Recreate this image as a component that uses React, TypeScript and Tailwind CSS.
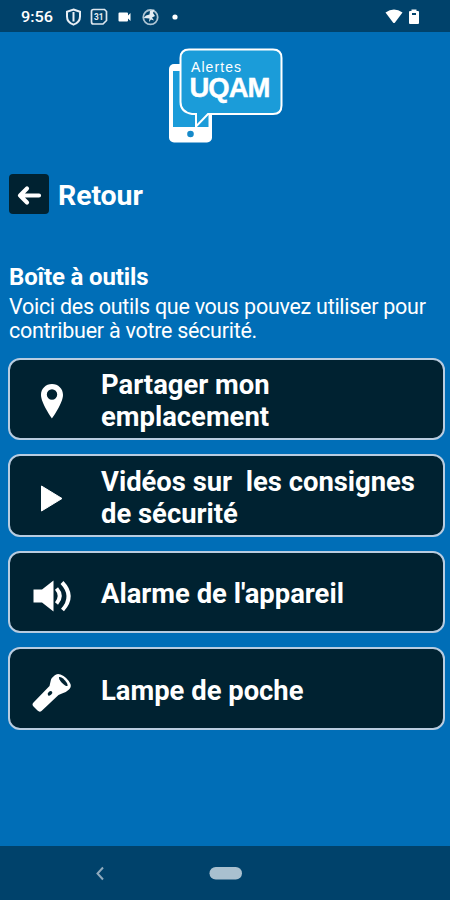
import React from "react";

function StatusBar() {
  return (
    <header className="h-8 shrink-0 bg-[#00426b] text-white">
      <svg width="450" height="32" viewBox="0 0 450 32" fill="none">
        <text x="21" y="22" fontSize="15" fontWeight="500" fill="#fff" textLength="32" lengthAdjust="spacingAndGlyphs">9:56</text>
        <path d="M73.500 9.500L80 11.800V16.500C80 20.500 77.300 23.300 73.500 24.600C69.700 23.300 67 20.500 67 16.500V11.800Z" stroke="#e8eff5" strokeWidth="2" />
        <path d="M73.500 12V21.500" stroke="#e8eff5" strokeWidth="2" />
        <path d="M93.500 9.500H104.500L106.500 11.500V20.500L103 24H93.500Q91.500 24 91.500 22V11.500Q91.500 9.500 93.500 9.500Z" stroke="#dce6ee" strokeWidth="1.700" />
        <text x="94" y="20" fontSize="8.500" fontWeight="700" fill="#e8eff5" textLength="9.500" lengthAdjust="spacingAndGlyphs">31</text>
        <path d="M119.500 12.500H127Q128 12.500 128 13.500V15.500L130.500 13V21L128 18.500V20.500Q128 21.500 127 21.500H119.500Q118.500 21.500 118.500 20.500V13.500Q118.500 12.500 119.500 12.500Z" fill="#fff" />
        <circle cx="150.500" cy="17.200" r="7.200" stroke="#adc4d3" strokeWidth="1.800" />
        <path d="M143.500 18L146 15.500L149.500 14.500L150 11L154.500 9.500L153 13L155 16L152 17.500L154 20.500L151 19.500L149 22L149.500 18.500Z" fill="#e4ecf2" />
        <circle cx="175" cy="17" r="2.600" fill="#fff" />
        <path d="M385.500 12.500Q394 6.500 402.500 12.500L395 22.500Q394 23.500 393 22.500Z" fill="#fff" />
        <path d="M410 11H411.500V9.500H416.500V11H418Q419 11 419 12V23Q419 24 418 24H410Q409 24 409 23V12Q409 11 410 11Z" fill="#fff" />
        <rect x="412" y="13" width="4" height="2" fill="#00426b" />
      </svg>
    </header>
  );
}

function Logo() {
  return (
    <svg width="116" height="98" viewBox="168 47 116 98" fill="none" aria-label="Alertes UQAM">
      <rect x="169" y="64" width="43" height="78.500" rx="5" fill="#fff" />
      <rect x="173" y="71" width="35.500" height="56" fill="#1b9cd9" />
      <circle cx="190.500" cy="134" r="3.300" fill="#1689c9" />
      <path d="M189 49.500H273Q281.500 49.500 281.500 58V105.500Q281.500 114 273 114H208L196 126.500V114H192Q180.500 112 180.500 102V58Q180.500 49.500 189 49.500Z" fill="#1b9cd9" stroke="#fff" strokeWidth="2" />
      <text x="191" y="71.500" fontFamily="Liberation Sans" fontSize="14" fill="#fff" textLength="50" lengthAdjust="spacing">Alertes</text>
      <text x="189.500" y="96.800" fontFamily="Liberation Sans" fontWeight="700" fontSize="27.500" fill="#fff" stroke="#fff" strokeWidth="0.400" textLength="81" lengthAdjust="spacing">UQAM</text>
    </svg>
  );
}

const PinIcon = () => (
  <svg width="84" height="79" viewBox="0 0 84 79">
    <path fillRule="evenodd" d="M42 25C35.700 25 31 29.700 31 36C31 44 42 59.500 42 59.500S53 44 53 36C53 29.700 48.300 25 42 25ZM42 30.300A5.200 5.200 0 1 1 42 40.700A5.200 5.200 0 1 1 42 30.300Z" fill="#fff" />
  </svg>
);
const PlayIcon = () => (
  <svg width="84" height="79" viewBox="0 0 84 79">
    <path d="M31.500 30L52 42.500L31.500 55Z" fill="#fff" stroke="#fff" strokeLinejoin="round" />
  </svg>
);
const SpeakerIcon = () => (
  <svg width="84" height="79" viewBox="0 0 84 79" fill="none">
    <path d="M23.500 37.500H32L43.500 28.500V59.500L32 50.500H23.500Z" fill="#fff" />
    <path d="M46.500 36.500Q53 44 46.500 51.500M52 30.500Q65 44 52.500 58" stroke="#fff" strokeWidth="4" />
  </svg>
);
const FlashlightIcon = () => (
  <svg width="84" height="79" viewBox="0 0 84 79" fill="none">
    <path d="M39.500 37L41 30.500Q42 28.500 44.500 26.500Q47 24 50.500 25.500Q57 28 60.500 35Q61.500 38 59 40.500Q56 43.500 52 44.500L48.500 46L31.500 62Q29.500 63.500 27.500 61.500L23.500 57.500Q21.500 55.500 23.500 53.500Z" fill="#fff" />
    <ellipse cx="53.300" cy="32.500" rx="2" ry="6" transform="rotate(-43 53.300 32.500)" fill="#002231" />
    <ellipse cx="40" cy="44.300" rx="2.700" ry="1.800" transform="rotate(-45 40 44.300)" fill="#002231" />
  </svg>
);

const tools = [
  { icon: <PinIcon />, label: <><span className="block">Partager mon</span><span className="block">emplacement</span></> },
  { icon: <PlayIcon />, label: <><span className="block">Vidéos sur&nbsp; les consignes</span><span className="block">de sécurité</span></> },
  { icon: <SpeakerIcon />, label: "Alarme de l'appareil" },
  { icon: <FlashlightIcon />, label: "Lampe de poche" },
];

export default function App() {
  return (
    <div className="flex h-[900px] w-[450px] flex-col overflow-hidden bg-[#006eb7] font-['Roboto',sans-serif] text-white">
      <StatusBar />
      <main className="flex flex-1 flex-col pl-2 pr-[5px]">
        <div className="mt-[15px] pl-[160px]"><Logo /></div>
        <button className="mt-[29px] flex h-10 items-center gap-[9px] text-left">
          <span className="ml-px grid size-10 place-items-center rounded-[4px] bg-[#002231]">
            <svg width="40" height="40" viewBox="0 0 40 40" fill="none">
              <path d="M30 21.500H11M18 14.500L11 21.500L18 28.500" stroke="#fff" strokeWidth="4.200" strokeLinecap="round" strokeLinejoin="round" />
            </svg>
          </span>
          <span className="pt-[3px] text-[28.500px] font-bold leading-8 tracking-[-0.1px]">Retour</span>
        </button>
        <h1 className="ml-px mt-[49px] text-[24px] font-bold leading-[28px] tracking-[-0.15px]">Boîte à outils</h1>
        <p className="ml-px mt-1 whitespace-nowrap text-[21.500px] leading-6 tracking-[-0.27px]">Voici des outils que vous pouvez utiliser pour<br />contribuer à votre sécurité.</p>
        <div className="mt-[14.500px] flex flex-col gap-[14px]">
          {tools.map((tool, i) => (
            <button key={i} className="flex h-[82.500px] items-center rounded-[12px] border-2 border-[#b8cce0] bg-[#002231] text-left">
              <span className="w-[91px] shrink-0">{tool.icon}</span>
              <span className="whitespace-nowrap pt-[5px] text-[27.400px] font-bold leading-8">{tool.label}</span>
            </button>
          ))}
        </div>
      </main>
      <nav className="h-[54px] shrink-0 bg-[#00426b]">
        <svg width="450" height="54" viewBox="0 0 450 54" fill="none">
          <path d="M103 21.500L97.500 27.500L103 33.500" stroke="#8faabd" strokeWidth="2" />
          <rect x="209.500" y="21" width="32.500" height="12.500" rx="6.250" fill="#a9c0cf" />
        </svg>
      </nav>
    </div>
  );
}
